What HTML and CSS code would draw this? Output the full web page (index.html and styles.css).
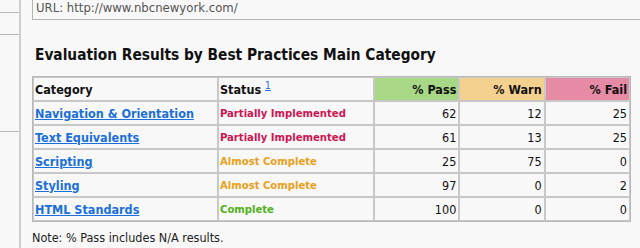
FILE: index.html
```html
<!DOCTYPE html>
<html>
<head>
<meta charset="utf-8">
<link rel="stylesheet" href="styles.css">
</head>
<body>
<div class="page">
  <aside class="side">
    <div class="side-item s1"></div>
    <div class="side-item s2"></div>
    <div class="side-item s3"></div>
  </aside>
  <main class="main">
    <div class="url">URL: http://www.nbcnewyork.com/</div>
    <h2 class="title">Evaluation Results by Best Practices Main Category</h2>
    <table class="results">
      <thead>
        <tr>
          <th class="c-cat">Category</th>
          <th class="c-status">Status <a class="fn" href="#">1</a></th>
          <th class="num pass">% Pass</th>
          <th class="num warn">% Warn</th>
          <th class="num fail">% Fail</th>
        </tr>
      </thead>
      <tbody>
        <tr>
          <td><a href="#" class="cat">Navigation &amp; Orientation</a></td>
          <td class="st partial">Partially Implemented</td>
          <td class="num">62</td><td class="num">12</td><td class="num">25</td>
        </tr>
        <tr>
          <td><a href="#" class="cat">Text Equivalents</a></td>
          <td class="st partial">Partially Implemented</td>
          <td class="num">61</td><td class="num">13</td><td class="num">25</td>
        </tr>
        <tr>
          <td><a href="#" class="cat">Scripting</a></td>
          <td class="st almost">Almost Complete</td>
          <td class="num">25</td><td class="num">75</td><td class="num">0</td>
        </tr>
        <tr>
          <td><a href="#" class="cat">Styling</a></td>
          <td class="st almost">Almost Complete</td>
          <td class="num">97</td><td class="num">0</td><td class="num">2</td>
        </tr>
        <tr>
          <td><a href="#" class="cat">HTML Standards</a></td>
          <td class="st complete">Complete</td>
          <td class="num">100</td><td class="num">0</td><td class="num">0</td>
        </tr>
      </tbody>
    </table>
    <p class="note">Note: % Pass includes N/A results.</p>
  </main>
</div>
</body>
</html>
```
FILE: styles.css
```css
html, body {
  margin: 0;
  padding: 0;
  background: #f8f8f8;
}
body {
  font-family: "DejaVu Sans Condensed", "DejaVu Sans", sans-serif;
  color: #111;
  overflow: hidden;
}
.page {
  display: flex;
  height: 248px;
}
.side {
  width: 19px;
  border-right: 2px solid #cfcfcf;
  flex: none;
}
.side-item {
  border-bottom: 1px solid #b8b8b8;
}
.s1 { height: 12px; }
.s2 { height: 21px; }
.s3 { height: 96px; }
.main {
  flex: 1;
  padding-left: 11px;
}
.url {
  height: 20px;
  box-sizing: border-box;
  border-left: 1px solid #b4b4b4;
  border-bottom: 1px solid #b4b4b4;
  padding-left: 3px;
  font-size: 13px;
  line-height: 16px;
  color: #555;
}
.title {
  margin: 25px 0 0 3px;
  font-size: 15.3px;
  line-height: 20px;
  font-weight: bold;
  color: #111;
}
.results {
  margin-top: 11px;
  width: 599px;
  border-collapse: separate;
  border-spacing: 0;
  border: 1px solid #b8b8b8;
  font-size: 12.5px;
  table-layout: fixed;
}
.results th, .results td {
  border: 1px solid #c8c8c8;
  height: 22px;
  padding: 0 2px 0 1px;
  text-align: left;
  white-space: nowrap;
}
.c-cat { width: 180px; }
.c-status { width: 151px; }
.results th.num, .results td.num { text-align: right; padding-right: 2px; }
.results th { font-weight: bold; color: #111; }
.pass { background: #a8d885; }
.warn { background: #f5d18f; }
.fail { background: #e68aa6; }
.fn {
  font-weight: normal;
  font-size: 10px;
  vertical-align: super;
  color: #2a6fd6;
}
.cat {
  color: #1a6fdc;
  font-weight: bold;
}
.st { font-weight: bold; font-size: 11.2px; }
.partial { color: #d01452; }
.almost { color: #eba020; }
.complete { color: #52b020; }
.note {
  margin: 8px 0 0;
  font-size: 12.5px;
  color: #222;
}
```
